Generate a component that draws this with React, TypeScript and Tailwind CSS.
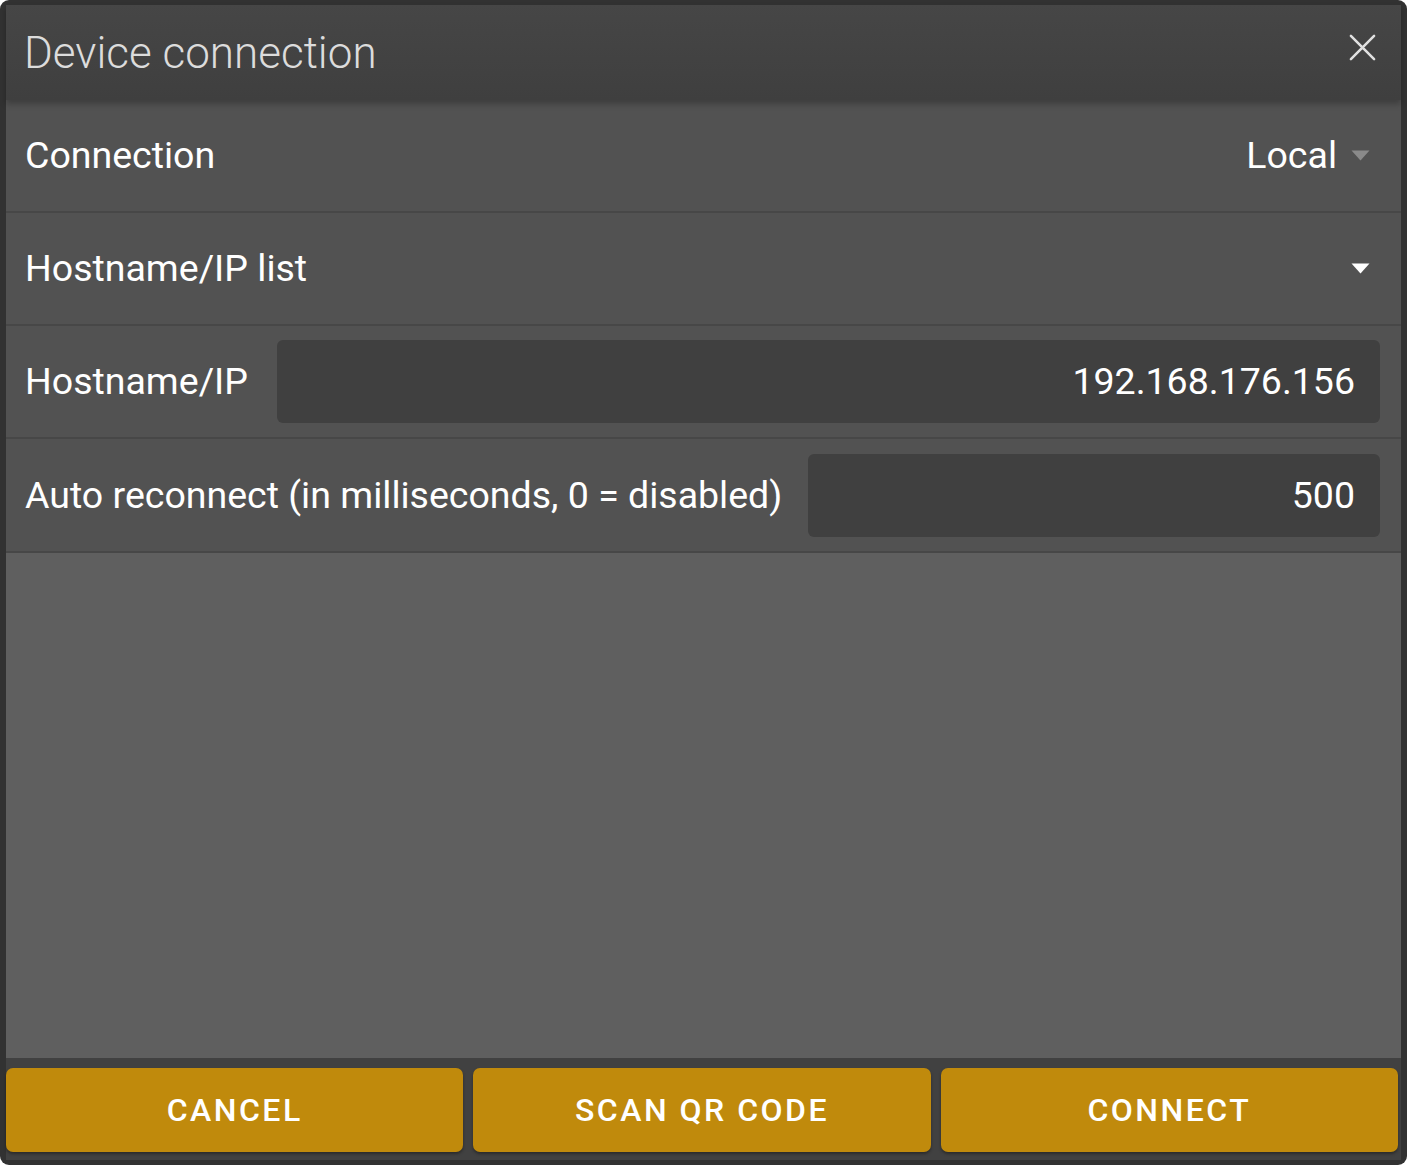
import React from "react";

const font = { fontFamily: "Roboto, 'Noto Sans', sans-serif" };

function Row({ children }: { children: React.ReactNode }) {
  return (
    <div className="flex h-[113px] items-center border-b-2 border-[#474747] bg-[#525252] pl-[19px] pr-[31px]">
      {children}
    </div>
  );
}

function Caret({ color }: { color: string }) {
  return (
    <svg width="19" height="11" viewBox="0 0 19 11" className="shrink-0">
      <path d="M0.5 0.5 L18.5 0.5 L9.5 10.5 Z" fill={color} />
    </svg>
  );
}

export default function App() {
  return (
    <div className="h-[1167px] w-[1407px] bg-white" style={font}>
      <div className="flex h-[1165px] flex-col overflow-hidden rounded-[9px] bg-[#323232] pb-[5px] pl-[6px] pr-[6px] pt-[5px]">
        <div className="relative z-10 flex h-[95px] shrink-0 items-center justify-between bg-gradient-to-b from-[#464646] to-[#3f3f3f] pl-[18px] pr-[24px] shadow-[0_4px_6px_rgba(0,0,0,0.25)]">
          <span className="text-[44px] font-light text-[#dcdcdc]">
            Device connection
          </span>
          <svg width="29" height="29" viewBox="0 0 30 30" className="mb-[10px]">
            <path
              d="M3 3 L27 27 M27 3 L3 27"
              stroke="#e0e0e0"
              strokeWidth="2.6"
              strokeLinecap="round"
            />
          </svg>
        </div>

        <Row>
          <span className="flex-1 text-[37.5px] text-white">Connection</span>
          <span className="mr-[14px] text-[37.5px] text-white">Local</span>
          <Caret color="#8a8a8a" />
        </Row>
        <Row>
          <span className="flex-1 text-[37.5px] text-white">Hostname/IP list</span>
          <Caret color="#ffffff" />
        </Row>
        <div className="flex h-[113px] items-center border-b-2 border-[#474747] bg-[#525252] pl-[19px] pr-[21px]">
          <span className="w-[252px] shrink-0 text-[37.5px] text-white">Hostname/IP</span>
          <div className="flex h-[83px] flex-1 items-center justify-end rounded-[6px] bg-[#404040] pr-[25px] text-[37.5px] text-white">
            192.168.176.156
          </div>
        </div>
        <div className="flex h-[114px] items-center border-b-2 border-[#474747] bg-[#525252] pl-[19px] pr-[21px]">
          <span className="flex-1 text-[37.5px] text-white">
            Auto reconnect (in milliseconds, 0 = disabled)
          </span>
          <div className="flex h-[83px] w-[572px] items-center justify-end rounded-[6px] bg-[#404040] pr-[25px] text-[37.5px] text-white">
            500
          </div>
        </div>

        <div className="flex-1 bg-[#5f5f5f]" />

        <div className="flex h-[102px] shrink-0 items-center gap-[10px] bg-[#414141] pr-[3px] pt-[2px]">
          {["CANCEL", "SCAN QR CODE", "CONNECT"].map((t) => (
            <button
              key={t}
              className="flex h-[84px] flex-1 items-center justify-center rounded-[7px] bg-[#c08a0c] text-[32px] font-medium tracking-[2.5px] text-white shadow-[0_2px_3px_rgba(0,0,0,0.35)]"
            >
              {t}
            </button>
          ))}
        </div>
      </div>
    </div>
  );
}
